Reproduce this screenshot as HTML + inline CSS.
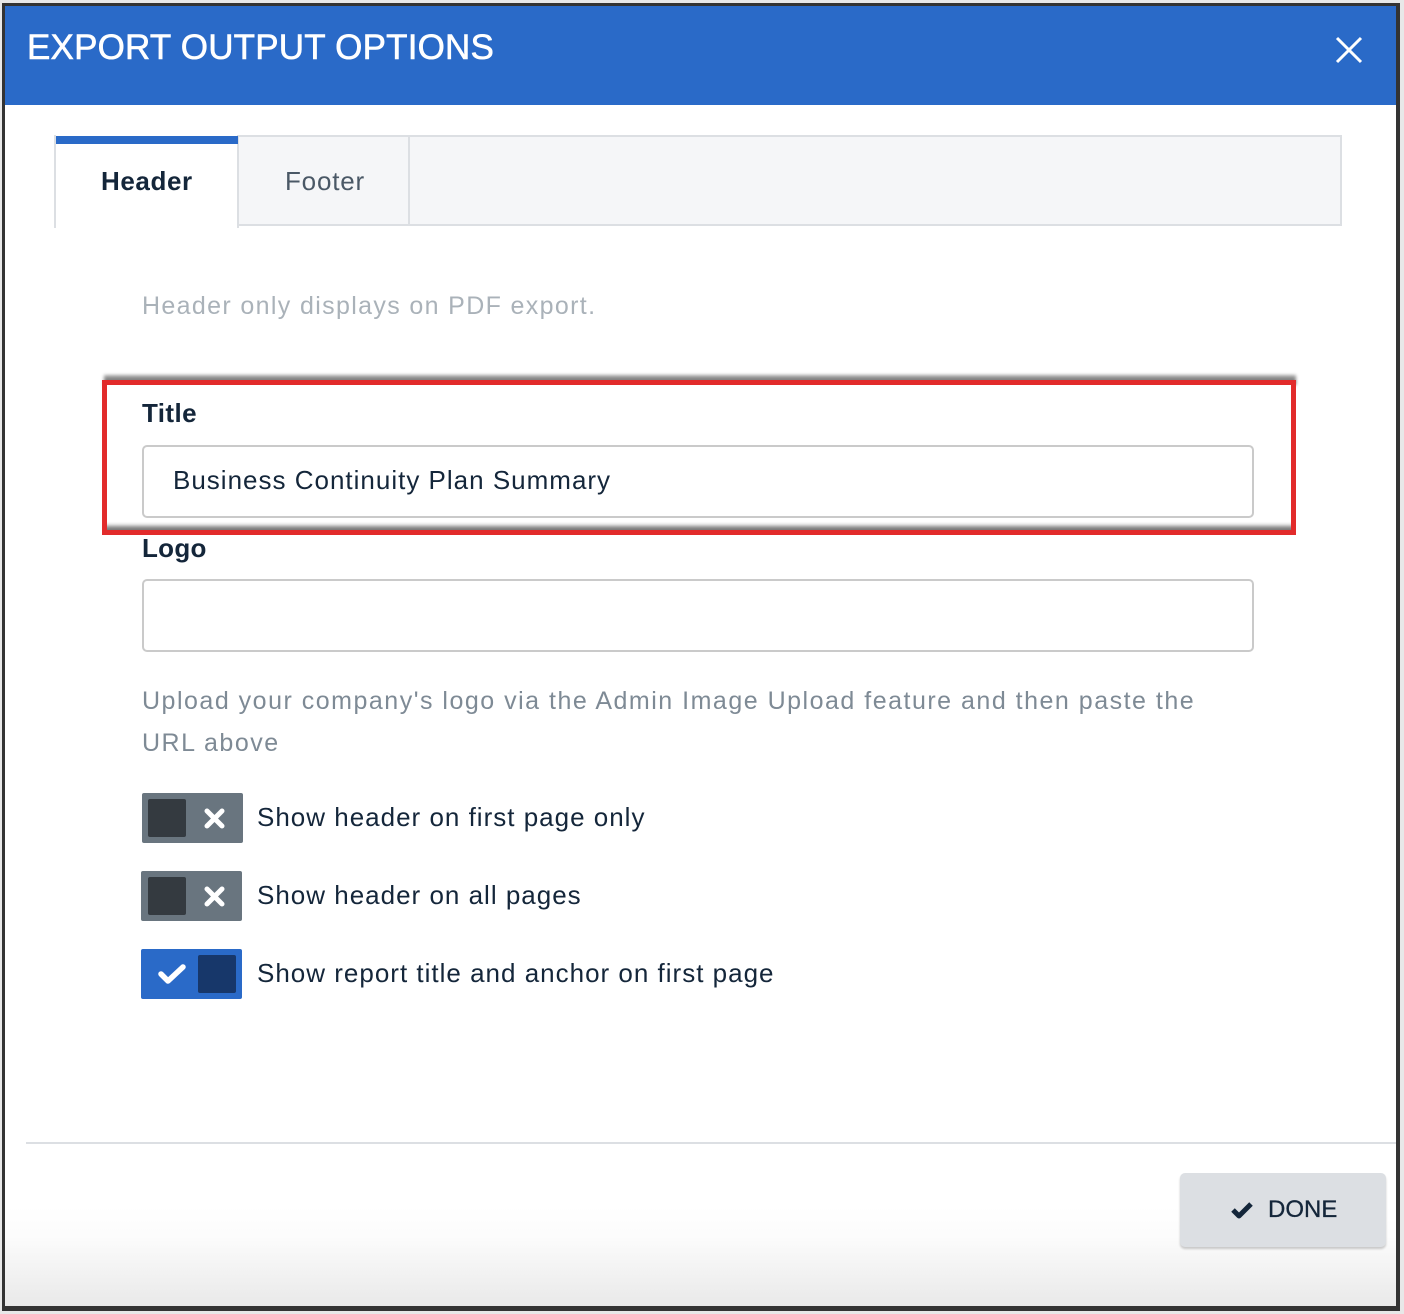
<!DOCTYPE html>
<html><head><meta charset="utf-8"><style>
*{box-sizing:border-box;margin:0;padding:0}
body{width:1404px;height:1314px;background:#e8e8e8;position:relative;overflow:hidden;font-family:"Liberation Sans",sans-serif;color:#14263a}
.a{position:absolute}
#frame{left:2px;top:3px;width:1398px;height:1308px;background:#333;}
#dlg{left:5px;top:6px;width:1391px;height:1300px;background:linear-gradient(to bottom,#fff 0,#fff 1200px,#fcfcfc 1230px,#e9e9e9 1300px);}
#hdr{left:5px;top:6px;width:1391px;height:99px;background:#2a6ac8;}
#ttl{left:27px;top:28px;color:#fff;font-size:35px;letter-spacing:0.2px;-webkit-text-stroke:0.6px #fff}
.txt{white-space:nowrap}
.tg{width:101px;height:50px;border-radius:2px}
.sq{position:absolute;width:38px;height:38px;border-radius:2px;top:6px}
.lbl{font-size:26px;color:#14263a;letter-spacing:1px}
</style></head><body>
<div class="a" id="frame"></div>
<div class="a" id="dlg"></div>
<div class="a" id="hdr"></div>
<div class="a txt" id="ttl">EXPORT OUTPUT OPTIONS</div>
<svg class="a" style="left:1335px;top:36px" width="28" height="28" viewBox="0 0 28 28"><path d="M2 2L26 26M26 2L2 26" stroke="#fff" stroke-width="3"/></svg>

<div class="a" style="left:55px;top:135px;width:1287px;height:91px;background:#f5f6f8;border:2px solid #dcdfe3;border-left:none"></div>
<div class="a" style="left:54px;top:135px;width:185px;height:93px;background:#fff;border-left:2px solid #dcdfe3;border-right:2px solid #dcdfe3"></div>
<div class="a" style="left:56px;top:136px;width:182px;height:8px;background:#2a6ac8"></div>
<div class="a" style="left:408px;top:135px;width:2px;height:91px;background:#dcdfe3"></div>
<div class="a txt" style="left:101px;top:166px;font-size:26px;font-weight:bold;color:#14263a;letter-spacing:0.6px">Header</div>
<div class="a txt" style="left:285px;top:166px;font-size:26px;color:#4a5866;letter-spacing:0.8px">Footer</div>

<div class="a txt" style="left:142px;top:292px;font-size:25px;color:#aab2b9;letter-spacing:1.35px">Header only displays on PDF export.</div>

<div class="a" style="left:104px;top:375px;width:1192px;height:10px;background:linear-gradient(#aaa,#555);filter:blur(1.5px)"></div>
<div class="a" style="left:102px;top:380px;width:1194px;height:155px;border:5px solid #e22b2b;background:#fff;box-shadow:inset 0 -9px 4px -5px #777"></div>
<div class="a txt" style="left:142px;top:398px;font-size:26px;font-weight:bold;letter-spacing:0.4px">Title</div>
<div class="a" style="left:142px;top:445px;width:1112px;height:73px;border:2px solid #cacaca;border-radius:5px;background:#fff"></div>
<div class="a txt" style="left:173px;top:465px;font-size:26px;letter-spacing:1px">Business Continuity Plan Summary</div>

<div class="a txt" style="left:142px;top:533px;font-size:26px;font-weight:bold;letter-spacing:0.3px">Logo</div>
<div class="a" style="left:142px;top:579px;width:1112px;height:73px;border:2px solid #cacaca;border-radius:5px;background:#fff"></div>

<div class="a" style="left:142px;top:680px;font-size:25px;color:#7e8a95;line-height:42px;width:1200px;letter-spacing:1.5px">Upload your company's logo via the Admin Image Upload feature and then paste the<br>URL above</div>

<div class="a tg" style="left:142px;top:793px;background:#69757f"><div class="sq" style="left:6px;background:#343a40"></div>
<svg class="a" style="left:62px;top:15px" width="21" height="21" viewBox="0 0 21 21"><path d="M3 3L18 18M18 3L3 18" stroke="#fff" stroke-width="5" stroke-linecap="round"/></svg></div>
<div class="a txt lbl" style="left:257px;top:802px">Show header on first page only</div>

<div class="a tg" style="left:141px;top:871px;background:#69757f"><div class="sq" style="left:7px;background:#343a40"></div>
<svg class="a" style="left:63px;top:15px" width="21" height="21" viewBox="0 0 21 21"><path d="M3 3L18 18M18 3L3 18" stroke="#fff" stroke-width="5" stroke-linecap="round"/></svg></div>
<div class="a txt lbl" style="left:257px;top:880px">Show header on all pages</div>

<div class="a tg" style="left:141px;top:949px;background:#2a6ac8"><div class="sq" style="left:57px;background:#17376a"></div>
<svg class="a" style="left:16px;top:14px" width="30" height="22" viewBox="0 0 30 22"><path d="M4 11L11 18L26 4" stroke="#fff" stroke-width="5.5" fill="none" stroke-linecap="round" stroke-linejoin="round"/></svg></div>
<div class="a txt lbl" style="left:257px;top:958px">Show report title and anchor on first page</div>

<div class="a" style="left:26px;top:1142px;width:1370px;height:2px;background:#dcdfe3"></div>

<div class="a" style="left:1180px;top:1173px;width:206px;height:74px;background:#dcdfe3;border-radius:5px;box-shadow:0 2px 2px rgba(0,0,0,.2)"></div>
<svg class="a" style="left:1230px;top:1200px" width="24" height="20" viewBox="0 0 24 20"><path d="M3 10L9 16L21 4" stroke="#14263a" stroke-width="5" fill="none" stroke-linejoin="round"/></svg>
<div class="a txt" style="left:1268px;top:1196px;font-size:24px;color:#14263a;-webkit-text-stroke:0.3px #14263a">DONE</div>
</body></html>
